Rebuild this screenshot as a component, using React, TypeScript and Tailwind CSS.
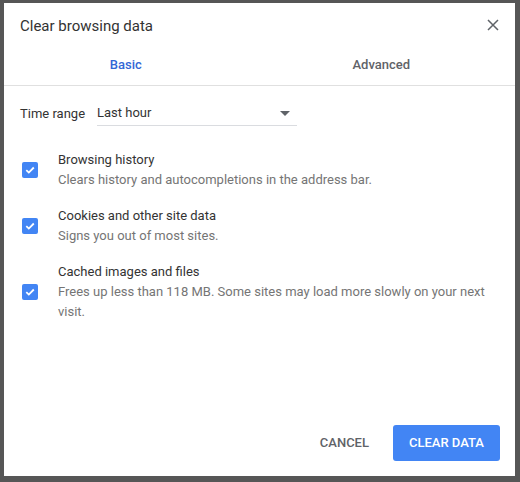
import React from "react";

function Check() {
  return (
    <div className="w-[16px] h-[16px] rounded-[2px] bg-[#4285f4] flex items-center justify-center shrink-0">
      <svg width="12" height="12" viewBox="0 0 12 12">
        <path d="M2.3 6.2 L4.8 8.6 L9.8 3.5" fill="none" stroke="#fff" strokeWidth="1.8" />
      </svg>
    </div>
  );
}

function Item({ title, desc }: { title: string; desc: React.ReactNode }) {
  return (
    <div className="flex items-center">
      <div className="ml-[2px] mr-[20px]">
        <Check />
      </div>
      <div className="text-[13px] leading-[20px]">
        <div className="text-[#333333]">{title}</div>
        <div className="text-[#757575]">{desc}</div>
      </div>
    </div>
  );
}

export default function App() {
  return (
    <div
      className="w-[520px] h-[482px] bg-[#565656] pt-[3px] pl-[4px] overflow-hidden"
      style={{ fontFamily: "Roboto, 'Liberation Sans', sans-serif" }}
    >
      <div className="w-[511px] h-[473px] bg-white flex flex-col">
        <div className="h-[41px] flex items-start justify-between pl-[16px] pr-[16px]">
          <div className="text-[15px] leading-[18px] text-[#333333] pt-[14px]">Clear browsing data</div>
          <svg width="12" height="12" viewBox="0 0 12 12" className="mt-[16px]">
            <path d="M1 1 L11 11 M11 1 L1 11" stroke="#5f6368" strokeWidth="1.5" />
          </svg>
        </div>
        <div className="border-b border-[#e0e0e0]">
          <div className="grid grid-cols-2 h-[41px] w-[511px] ml-[-6px] text-[13px] font-medium">
            <div className="flex items-center justify-center text-[#3367d6]">Basic</div>
            <div className="flex items-center justify-center text-[#5f6368]">Advanced</div>
          </div>
        </div>
        <div className="px-[16px] pt-[15px]">
          <div className="flex items-center h-[25px] text-[13px]">
            <div className="w-[77px] text-[#333333]">Time range</div>
            <div className="w-[200px] h-[25px] border-b border-[#dadce0] flex items-center justify-between pr-[7px] text-[#333333]">
              <span>Last hour</span>
              <svg width="10" height="5" viewBox="0 0 10 5">
                <path d="M0 0 L10 0 L5 5 Z" fill="#5f6368" />
              </svg>
            </div>
          </div>
          <div className="mt-[24px] flex flex-col gap-[16px]">
            <Item title="Browsing history" desc="Clears history and autocompletions in the address bar." />
            <Item title="Cookies and other site data" desc="Signs you out of most sites." />
            <Item
              title="Cached images and files"
              desc={<>Frees up less than 118 MB. Some sites may load more slowly on your next<br />visit.</>}
            />
          </div>
        </div>
        <div className="mt-auto flex justify-end items-center pr-[15px] pb-[15px] text-[13px] font-medium">
          <button className="h-[36px] px-[16px] text-[#5f6368]">CANCEL</button>
          <button className="ml-[8px] h-[36px] px-[16px] rounded-[3px] bg-[#4285f4] text-white">CLEAR DATA</button>
        </div>
      </div>
    </div>
  );
}
